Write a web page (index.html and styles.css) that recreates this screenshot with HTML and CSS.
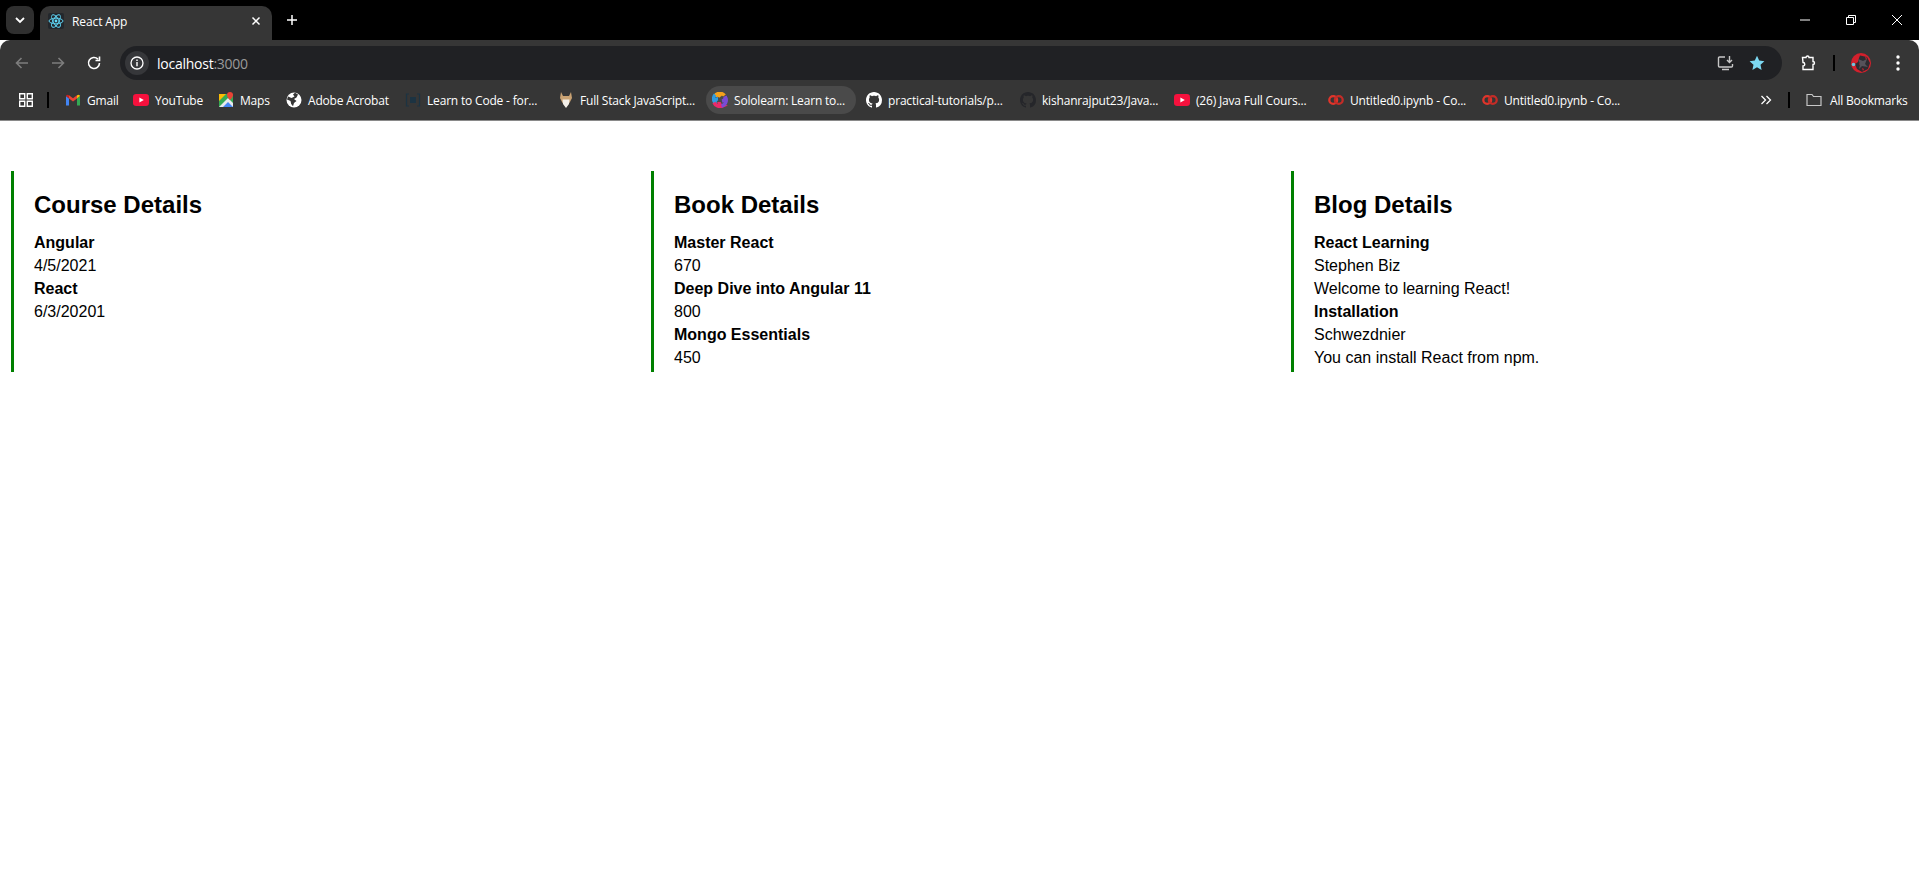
FILE: index.html
```html
<!DOCTYPE html>
<html lang="en">
<head>
    <meta charset="UTF-8">
    <meta name="viewport" content="width=device-width, initial-scale=1.0">
    <title>React App</title>
    <link rel="stylesheet" href="styles.css">
</head>
<body>
    <svg class="sprites" width="0" height="0">
        <symbol id="i-github" viewBox="0 0 16 16">
            <path d="M8 0C3.58 0 0 3.58 0 8c0 3.54 2.29 6.53 5.47 7.59.4.07.55-.17.55-.38 0-.19-.01-.82-.01-1.49-2.01.37-2.53-.49-2.69-.94-.09-.23-.48-.94-.82-1.13-.28-.15-.68-.52-.01-.53.63-.01 1.08.58 1.23.82.72 1.21 1.87.87 2.33.66.07-.52.28-.87.51-1.07-1.78-.2-3.64-.89-3.64-3.95 0-.87.31-1.59.82-2.15-.08-.2-.36-1.02.08-2.12 0 0 .67-.21 2.2.82.64-.18 1.32-.27 2-.27.68 0 1.36.09 2 .27 1.53-1.04 2.2-.82 2.2-.82.44 1.1.16 1.92.08 2.12.51.56.82 1.27.82 2.15 0 3.07-1.87 3.75-3.65 3.95.29.25.54.73.54 1.48 0 1.07-.01 1.93-.01 2.2 0 .21.15.46.55.38A8.013 8.013 0 0016 8c0-4.42-3.58-8-8-8z"/>
        </symbol>
        <symbol id="i-youtube" viewBox="0 0 16 16">
            <rect x="0" y="2" width="16" height="12" rx="3.2" fill="#f6113d"/>
            <path d="M6.4 5.4 10.8 8 6.4 10.6z" fill="#fff"/>
        </symbol>
        <symbol id="i-colab" viewBox="0 0 16 16">
            <circle cx="5.200" cy="8" r="3.900" fill="none" stroke="#e0352b" stroke-width="2.300"/>
            <circle cx="10.800" cy="8" r="3.900" fill="none" stroke="#c42c27" stroke-width="2.300"/>
        </symbol>
    </svg>

    <header class="browser">
        <div class="tabstrip">
            <button class="tab-search">
                <svg width="12" height="12" viewBox="0 0 12 12"><path d="M2 4l4 4 4-4" fill="none" stroke="#fff" stroke-width="1.8"/></svg>
            </button>
            <div class="tab">
                <span class="favicon">
                    <svg width="16" height="16" viewBox="0 0 16 16">
                        <g fill="none" stroke="#61dafb" stroke-width=".9">
                            <ellipse cx="8" cy="8" rx="7" ry="2.8"/>
                            <ellipse cx="8" cy="8" rx="7" ry="2.8" transform="rotate(60 8 8)"/>
                            <ellipse cx="8" cy="8" rx="7" ry="2.8" transform="rotate(120 8 8)"/>
                        </g>
                        <circle cx="8" cy="8" r="1.4" fill="#61dafb"/>
                    </svg>
                </span>
                <span class="tab-title">React App</span>
                <svg class="tab-close" width="10" height="10" viewBox="0 0 10 10"><path d="M1.5 1.5l7 7m0-7l-7 7" stroke="#fff" stroke-width="1.5"/></svg>
            </div>
            <svg class="new-tab" width="12" height="12" viewBox="0 0 12 12"><path d="M6 1v10M1 6h10" stroke="#fff" stroke-width="1.5"/></svg>
            <div class="window-controls">
                <svg width="12" height="12" viewBox="0 0 12 12"><path d="M1 6h10" stroke="#fff"/></svg>
                <svg width="12" height="12" viewBox="0 0 12 12"><path d="M1.5 3.5h7v7h-7zM3.5 3.5v-2h7v7h-2" fill="none" stroke="#fff"/></svg>
                <svg width="12" height="12" viewBox="0 0 12 12"><path d="M1 1l10 10m0-10L1 11" stroke="#fff"/></svg>
            </div>
        </div>

        <div class="toolbar">
            <svg class="nav-icon" width="16" height="16" viewBox="0 0 16 16"><path d="M14 8H2.500M7.500 3l-5 5 5 5" fill="none" stroke="#7d7d7d" stroke-width="1.6"/></svg>
            <svg class="nav-icon" width="16" height="16" viewBox="0 0 16 16"><path d="M2 8h11.500M8.500 3l5 5-5 5" fill="none" stroke="#7d7d7d" stroke-width="1.6"/></svg>
            <svg class="nav-icon" width="16" height="16" viewBox="0 0 16 16"><path d="M13.500 8a5.500 5.500 0 1 1-1.600-3.900M13.500 1.500v4h-4" fill="none" stroke="#fff" stroke-width="1.6"/></svg>
            <div class="omnibox">
                <span class="site-info">
                    <svg width="14" height="14" viewBox="0 0 14 14"><circle cx="7" cy="7" r="6" fill="none" stroke="#fff" stroke-width="1.3"/><path d="M7 6v4.200M7 3.600v1.300" stroke="#fff" stroke-width="1.4"/></svg>
                </span>
                <span class="url">localhost<span class="url-port">:3000</span></span>
                <svg class="omni-icon" width="18" height="16" viewBox="0 0 18 16"><path d="M8 2H2.500a1 1 0 0 0-1 1v8a1 1 0 0 0 1 1h12a1 1 0 0 0 1-1V9M5 14.500h7" fill="none" stroke="#c7c7c7" stroke-width="1.400"/><path d="M12.500 1v6M10 5l2.500 2.500L15 5" fill="none" stroke="#c7c7c7" stroke-width="1.400"/></svg>
                <svg class="omni-star" width="16" height="16" viewBox="0 0 16 16"><path d="M8 .8l2.200 4.800 5.200.6-3.900 3.500 1.100 5.200L8 12.300l-4.600 2.600 1.100-5.200L.6 6.200l5.200-.6z" fill="#7cd8f2"/></svg>
            </div>
            <svg class="ext-icon" width="16" height="16" viewBox="0 0 16 16"><path d="M1.500 2.500h3.500a1.500 1.500 0 0 1 3 0h4v4a1.500 1.500 0 0 1 0 3v5h-10v-3.500a1.500 1.500 0 0 0 0-3.500z" fill="none" stroke="#fff" stroke-width="1.400"/></svg>
            <span class="bar-divider"></span>
            <svg class="avatar" width="20" height="20" viewBox="0 0 20 20">
                <circle cx="10" cy="10" r="10" fill="#d3202c"/>
                <path d="M9 2.500l7 1.500 3 6-2 6-6 3-5-3-2-5 3-2 1-4z" fill="#2d2b30"/>
                <path d="M7 6l5 2 4-2-2 5 3 3-6-1-3 3 1-5z" fill="#55525a"/>
                <path d="M14 3l2 2-1 2zM11 15l2 1-1 2zM8 10l1 1-1 1z" fill="#c9222e"/>
                <circle cx="2.500" cy="11.500" r="1.800" fill="#6fc4dc"/>
            </svg>
            <svg class="menu-icon" width="4" height="16" viewBox="0 0 4 16"><circle cx="2" cy="2" r="1.700" fill="#fff"/><circle cx="2" cy="8" r="1.700" fill="#fff"/><circle cx="2" cy="14" r="1.700" fill="#fff"/></svg>
        </div>

        <nav class="bookmarks">
            <svg class="apps-icon" width="14" height="14" viewBox="0 0 14 14"><path d="M.7.7h5v5h-5zM8.300.7h5v5h-5zM.7 8.300h5v5h-5zM8.300 8.300h5v5h-5z" fill="none" stroke="#fff" stroke-width="1.400"/></svg>
            <span class="bar-divider bm-divider"></span>
            <a class="bm bm-64">
                <svg width="16" height="16" viewBox="0 0 16 16">
                    <path d="M1 4v9.500h3V6.500z" fill="#4285f4"/>
                    <path d="M15 4v9.500h-3V6.500z" fill="#34a853"/>
                    <path d="M4 6.500 8 9.500l4-3V3.300L8 6.300 4 3.300z" fill="#ea4335"/>
                    <path d="M1 4a1.300 1.300 0 0 1 2-1l1 .3v3.200z" fill="#c5221f"/>
                    <path d="M15 4a1.300 1.300 0 0 0-2-1l-1 .3v3.200z" fill="#fbbc04"/>
                </svg>
                Gmail
            </a>
            <a class="bm bm-81"><svg width="16" height="16"><use href="#i-youtube"/></svg>YouTube</a>
            <a class="bm bm-64">
                <svg width="16" height="16" viewBox="0 0 16 16">
                    <rect x="1" y="2" width="14" height="13" fill="#34a853"/>
                    <path d="M1 2h7L1 9z" fill="#fbbc04"/>
                    <path d="M1 15l9-9 5 5v4z" fill="#e8eaed"/>
                    <path d="M5 15l5-5 5 5z" fill="#4285f4"/>
                    <path d="M12 0a3 3 0 0 1 3 3c0 2-3 5-3 5S9 5 9 3a3 3 0 0 1 3-3z" fill="#ea4335"/>
                </svg>
                Maps
            </a>
            <a class="bm bm-115">
                <svg width="16" height="16" viewBox="0 0 16 16">
                    <circle cx="8" cy="8" r="7.500" fill="#fff"/>
                    <path d="M9 .8 7 2.500l1.500 2-3 1.500-3.500-1.500L1 7.500l3.500 1.500.7 3 1.800 2.200 1-3.200 2.500-2L8 7l2.500-1.500 1.500-3z" fill="#363636"/>
                </svg>
                Adobe Acrobat
            </a>
            <a class="bm bm-149">
                <svg width="16" height="16" viewBox="0 0 16 16"><path d="M4 2H1.500v12H4M12 2h2.500v12H12" fill="none" stroke="#1c3342" stroke-width="1.200"/><rect x="5" y="5" width="6" height="6" fill="#1c3342"/></svg>
                Learn to Code - for...
            </a>
            <a class="bm bm-150">
                <svg width="16" height="16" viewBox="0 0 16 16">
                    <path d="M3 0l2 4h6l2-4 1 6-2 4-4 5-4-5-2-4z" fill="#c9a273"/>
                    <path d="M4.500 7.500h7L11 12l-3 4-3-4z" fill="#f3efe9"/>
                </svg>
                Full Stack JavaScript...
            </a>
            <a class="bm bm-150 bm-hover">
                <svg width="16" height="16" viewBox="0 0 16 16" fill="none" stroke-width="3.400">
                    <path d="M12.500 3.500A6 6 0 0 0 3 3.800c1.500-1 4-1 5.500 1" stroke="#f6a11b"/>
                    <path d="M3.200 2.800C1 5 1 8.500 3 10.500 3 8.500 4.500 6.800 6 6.800" stroke="#2f9be0"/>
                    <path d="M2 10.500a6.500 6.500 0 0 0 8.500 3.500C8.500 13.500 7 12 7 10" stroke="#ea2a6a"/>
                    <path d="M9.500 14a6 6 0 0 0 3.500-9.500c.5 2-.5 4-3 4.500" stroke="#7a4bd6"/>
                </svg>
                Sololearn: Learn to...
            </a>
            <a class="bm bm-150"><svg class="gh-light" width="16" height="16"><use href="#i-github"/></svg>practical-tutorials/p...</a>
            <a class="bm bm-150"><svg class="gh-dark" width="16" height="16"><use href="#i-github"/></svg>kishanrajput23/Java...</a>
            <a class="bm bm-150"><svg width="16" height="16"><use href="#i-youtube"/></svg>(26) Java Full Cours...</a>
            <a class="bm bm-150"><svg width="16" height="16"><use href="#i-colab"/></svg>Untitled0.ipynb - Co...</a>
            <a class="bm bm-150"><svg width="16" height="16"><use href="#i-colab"/></svg>Untitled0.ipynb - Co...</a>
            <svg class="bm-more" width="12" height="12" viewBox="0 0 12 12"><path d="M1.500 2l4 4-4 4M6.500 2l4 4-4 4" fill="none" stroke="#fff" stroke-width="1.300"/></svg>
            <span class="bar-divider bm-divider-end"></span>
            <a class="bm bm-all">
                <svg width="16" height="16" viewBox="0 0 16 16"><path d="M1 13.500v-11h5l1.500 2h7.500v9z" fill="none" stroke="#c7c7c7" stroke-width="1.200"/></svg>
                All Bookmarks
            </a>
        </nav>
    </header>

    <main class="details">
        <section class="detail">
            <h2>Course Details</h2>
            <div>
                <h4>Angular</h4>
                <p>4/5/2021</p>
            </div>
            <div>
                <h4>React</h4>
                <p>6/3/20201</p>
            </div>
        </section>
        <section class="detail">
            <h2>Book Details</h2>
            <div>
                <h4>Master React</h4>
                <p>670</p>
            </div>
            <div>
                <h4>Deep Dive into Angular 11</h4>
                <p>800</p>
            </div>
            <div>
                <h4>Mongo Essentials</h4>
                <p>450</p>
            </div>
        </section>
        <section class="detail">
            <h2>Blog Details</h2>
            <div>
                <h4>React Learning</h4>
                <p>Stephen Biz</p>
                <p>Welcome to learning React!</p>
            </div>
            <div>
                <h4>Installation</h4>
                <p>Schwezdnier</p>
                <p>You can install React from npm.</p>
            </div>
        </section>
    </main>
</body>
</html>
```

FILE: styles.css
```css
body {
    margin: 0;
    background-color: #ffffff;
    color: #000000;
    font-family: "Liberation Sans", Arial, sans-serif;
}
svg {
    display: block;
    flex: none;
}
.sprites {
    position: absolute;
}
.gh-light {
    fill: #ffffff;
}
.gh-dark {
    fill: #25262a;
}

/* browser chrome */
.browser {
    font-family: "Open Sans", "Noto Sans", sans-serif;
    color: #ffffff;
    border-bottom: 1px solid #8a8a8a;
}
.tabstrip {
    height: 40px;
    background-color: #000000;
    display: flex;
    align-items: flex-end;
}
.tab-search {
    width: 28px;
    height: 28px;
    margin: 0 6px 6px 6px;
    padding: 0;
    border: none;
    border-radius: 8px;
    background-color: #2f2f2f;
    display: flex;
    align-items: center;
    justify-content: center;
}
.tab {
    width: 232px;
    height: 34px;
    box-sizing: border-box;
    padding: 0 11px 4px 8px;
    background-color: #363636;
    border-radius: 10px 10px 0 0;
    display: flex;
    align-items: center;
}
.favicon {
    background-color: #23272c;
    border-radius: 2px;
}
.tab-title {
    margin-left: 8px;
    flex: 1;
    font-size: 12px;
    letter-spacing: -.1px;
}
.new-tab {
    margin: 0 0 14px 14px;
}
.window-controls {
    margin-left: auto;
    margin-bottom: 14px;
    padding-right: 16px;
    display: flex;
    gap: 34px;
}
.toolbar {
    height: 46px;
    background-color: #363636;
    border-radius: 10px 10px 0 0;
    display: flex;
    align-items: center;
    padding-left: 14px;
}
.nav-icon {
    margin-right: 20px;
}
.omnibox {
    margin-left: -2px;
    width: 1662px;
    height: 34px;
    box-sizing: border-box;
    padding: 0 17px 0 5px;
    border-radius: 17px;
    background-color: #202124;
    display: flex;
    align-items: center;
}
.site-info {
    width: 24px;
    height: 24px;
    border-radius: 50%;
    background-color: #36373a;
    display: flex;
    align-items: center;
    justify-content: center;
}
.url {
    margin-left: 8px;
    flex: 1;
    font-size: 14px;
    letter-spacing: -.25px;
}
.url-port {
    color: #9a9a9a;
}
.omni-star {
    margin-left: 14px;
}
.ext-icon {
    margin-left: 19px;
}
.bar-divider {
    width: 2px;
    height: 16px;
    background-color: #000000;
    flex: none;
}
.toolbar .bar-divider {
    margin-left: 16px;
}
.avatar {
    margin-left: 16px;
}
.menu-icon {
    margin-left: 25px;
}
.bookmarks {
    height: 34px;
    box-sizing: border-box;
    padding: 0 0 6px 19px;
    background-color: #363636;
    display: flex;
    align-items: center;
    gap: 4px;
    font-size: 12px;
    letter-spacing: -.18px;
}
.bm {
    height: 28px;
    box-sizing: border-box;
    padding: 0 6px;
    border-radius: 14px;
    display: flex;
    align-items: center;
    gap: 6px;
    white-space: nowrap;
    overflow: hidden;
    flex: none;
}
.bm-64 { width: 64px; }
.bm-81 { width: 81px; }
.bm-115 { width: 115px; }
.bm-149 { width: 149px; }
.bm-150 { width: 150px; }
.bm-hover {
    background-color: #4a4a4a;
}
.bm-divider {
    margin: 0 6px 0 10px;
}
.bm-more {
    margin-left: 130px;
}
.bm-divider-end {
    margin: 0 6px 0 12px;
}
.bm-all {
    gap: 8px;
}

/* page */
.details {
    display: grid;
    grid-template-columns: repeat(3, 640px);
    padding-top: 50px;
    overflow: hidden;
}
.detail {
    margin-left: 11px;
    padding: 20px 0 3px 20px;
    border-left: 3px solid green;
    font-size: 16px;
    line-height: 23px;
}
.detail h2 {
    margin: 0 0 12px 0;
    font-size: 24px;
    line-height: 28px;
}
.detail h4 {
    margin: 0;
    font-size: 16px;
}
.detail p {
    margin: 0;
}
```
